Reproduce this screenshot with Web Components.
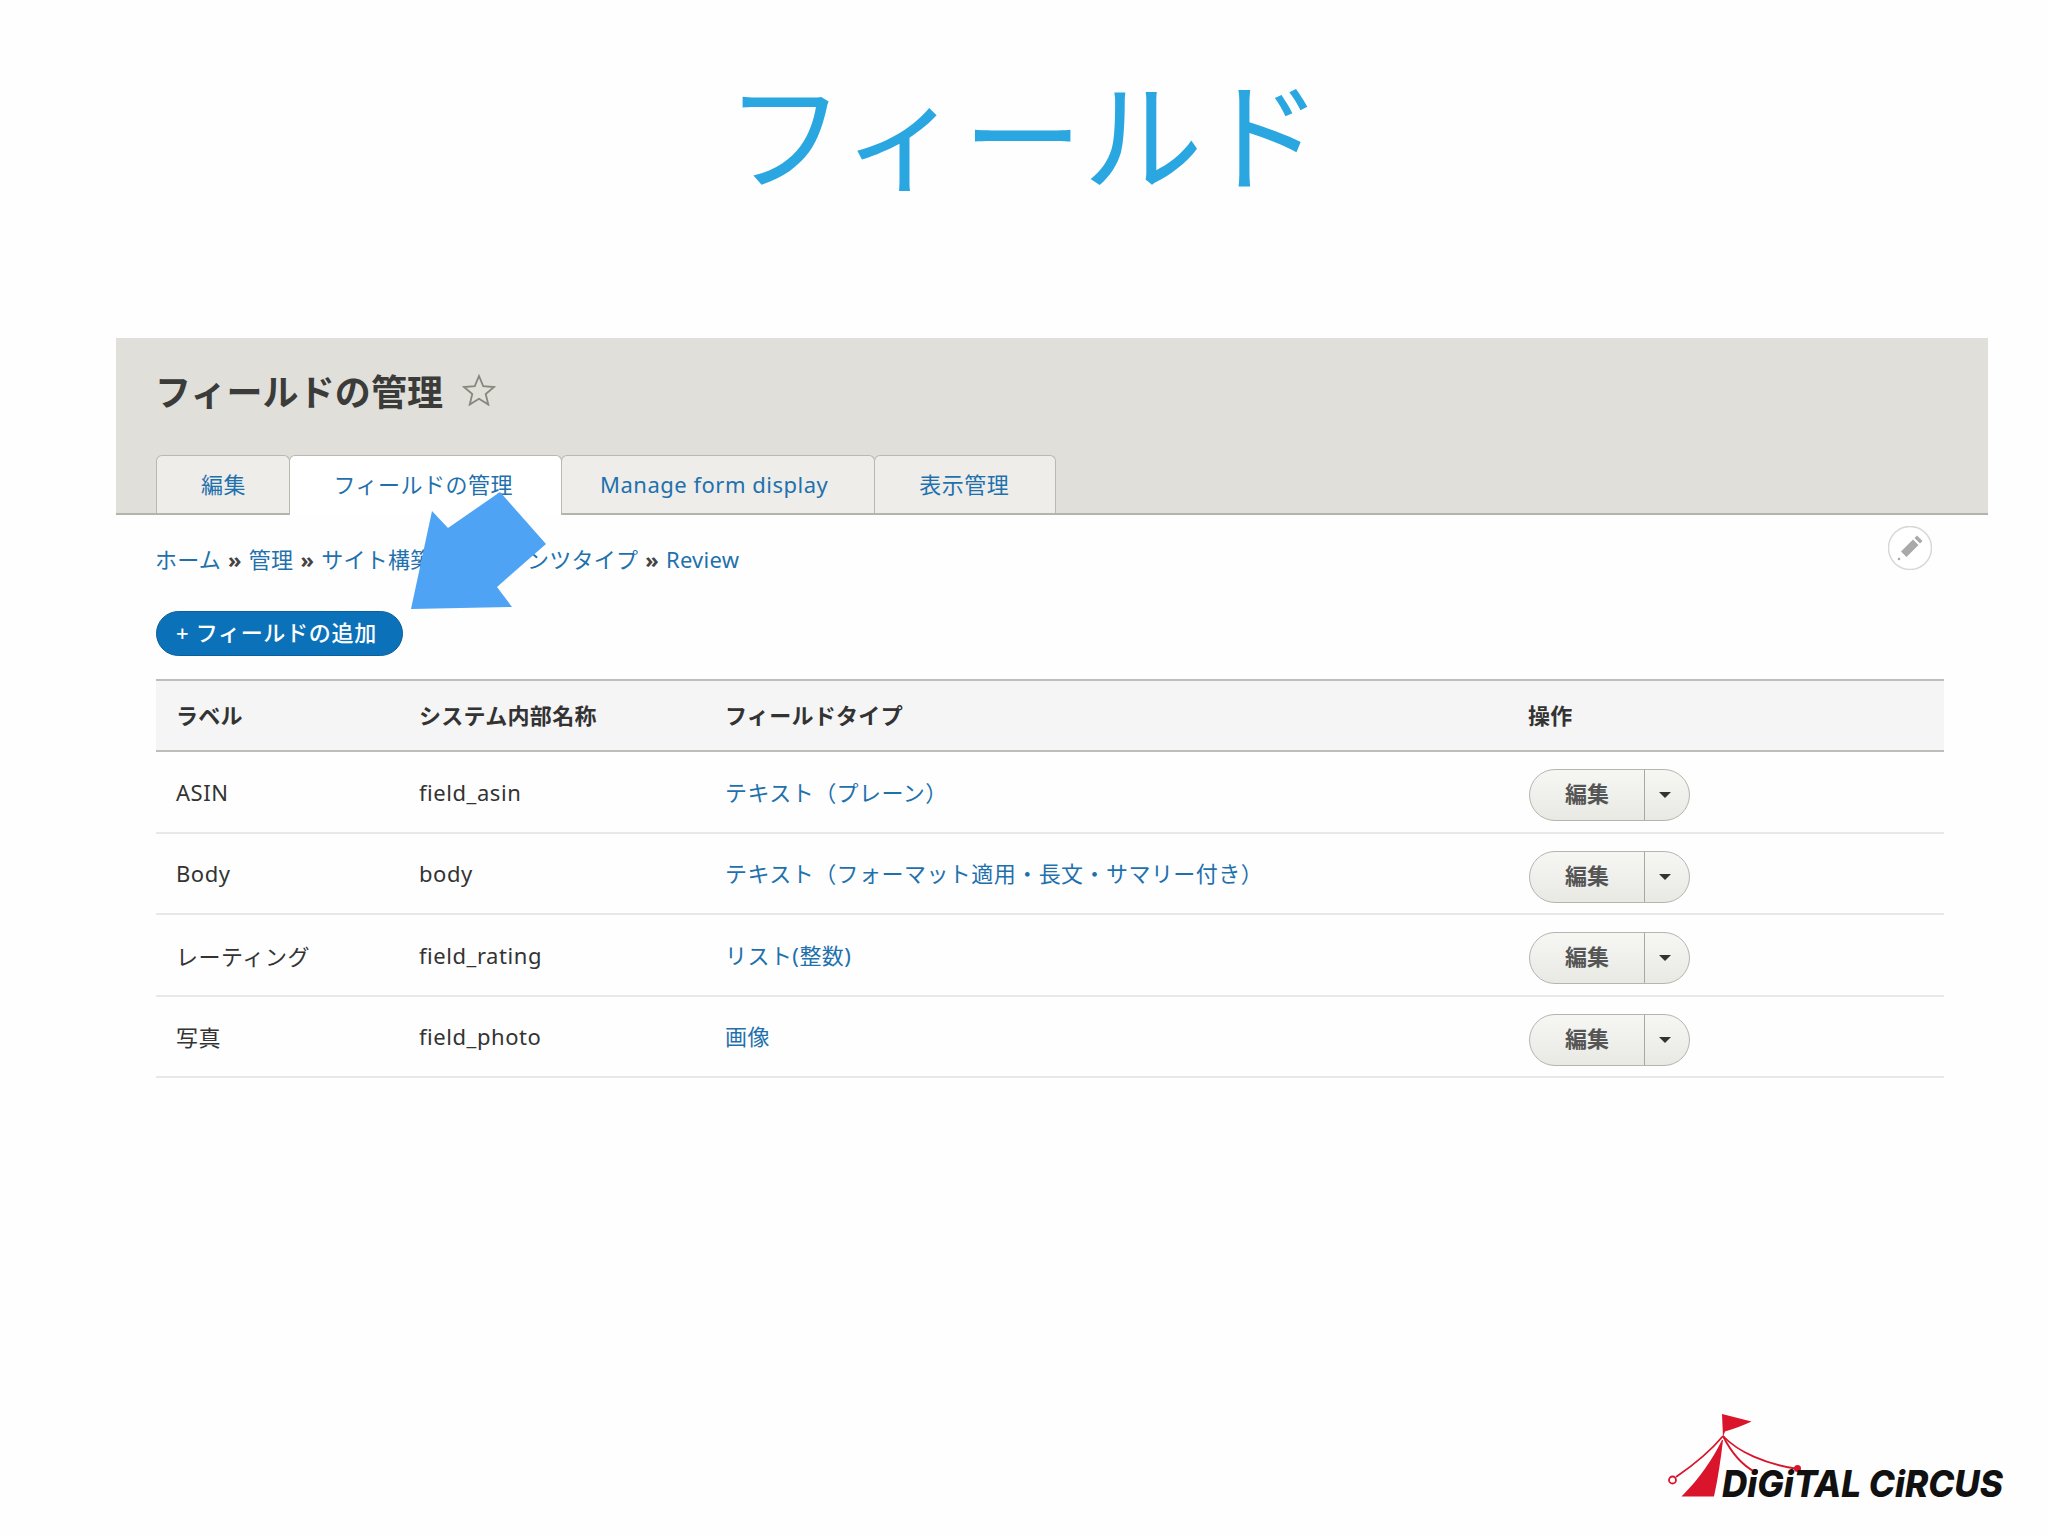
<!DOCTYPE html>
<html lang="ja">
<head>
<meta charset="utf-8">
<title>フィールド</title>
<style>
	html, body {
		margin: 0;
		background: #fefefe;
	}

	body {
		font-family: "Noto Sans", "Noto Sans CJK JP", sans-serif;
		font-size: 22px;
		color: #333;
	}
</style>
</head>
<body>
<field-slide>
	<span slot="title">フィールド</span>
	<admin-header title-text="フィールドの管理">
		<admin-tab style="padding-right: 42.500px">編集</admin-tab>
		<admin-tab active style="padding-right: 48px">フィールドの管理</admin-tab>
		<admin-tab style="padding: 0 46px 0 38px">Manage form display</admin-tab>
		<admin-tab style="padding-right: 46px">表示管理</admin-tab>
	</admin-header>
	<admin-breadcrumb>
		<a>ホーム</a><b>»</b><a>管理</a><b>»</b><a>サイト構築</a><b>»</b><a>コンテンツタイプ</a><b>»</b><a>Review</a>
	</admin-breadcrumb>
	<add-button>+ フィールドの追加</add-button>
	<field-table>
		<field-row head>
			<span slot="label">ラベル</span>
			<span slot="name">システム内部名称</span>
			<span slot="type">フィールドタイプ</span>
			<span slot="ops">操作</span>
		</field-row>
		<field-row>
			<span slot="label">ASIN</span>
			<span slot="name">field_asin</span>
			<span slot="type">テキスト（プレーン）</span>
			<op-button slot="ops">編集</op-button>
		</field-row>
		<field-row>
			<span slot="label">Body</span>
			<span slot="name">body</span>
			<span slot="type">テキスト（フォーマット適用・長文・サマリー付き）</span>
			<op-button slot="ops">編集</op-button>
		</field-row>
		<field-row>
			<span slot="label">レーティング</span>
			<span slot="name">field_rating</span>
			<span slot="type">リスト(整数)</span>
			<op-button slot="ops">編集</op-button>
		</field-row>
		<field-row>
			<span slot="label">写真</span>
			<span slot="name">field_photo</span>
			<span slot="type">画像</span>
			<op-button slot="ops">編集</op-button>
		</field-row>
	</field-table>
</field-slide>

<script>
class FieldSlide extends HTMLElement {
	connectedCallback() {
		if (this.shadowRoot) return;
		const shadow = this.attachShadow({ mode: 'open' });
		shadow.innerHTML = `
			<style>
				:host {
					display: flex;
					flex-direction: column;
					position: relative;
					height: 1536px;
					overflow: hidden;
				}

				h1 {
					margin: 0;
					height: 338px;
					box-sizing: border-box;
					padding-top: 50px;
					text-align: center;
					font-family: "Noto Sans CJK JP", sans-serif;
					font-weight: 400;
					font-size: 120px;
					line-height: 160px;
					color: #2aa7e0;
				}

				.page {
					margin: 0 60px 0 116px;
				}

				.body {
					padding: 0 44px 0 40px;
				}

				.arrow {
					position: absolute;
					left: 0;
					top: 0;
				}

				digital-logo {
					margin: auto 8px 6px auto;
				}
			</style>
			<h1><slot name="title"></slot></h1>
			<div class="page">
				<slot name="header"></slot>
				<div class="body"><slot></slot></div>
			</div>
			<digital-logo></digital-logo>
			<svg class="arrow" width="600" height="640" viewBox="0 0 600 640">
				<polygon fill="#4fa3f5" points="411,609 432,511 448,528 500,492 546,544 497,587 512,607"/>
			</svg>
		`;
		this.querySelector('admin-header').slot = 'header';
	}
}

class AdminHeader extends HTMLElement {
	connectedCallback() {
		if (this.shadowRoot) return;
		const shadow = this.attachShadow({ mode: 'open' });
		shadow.innerHTML = `
			<style>
				:host {
					display: block;
					box-sizing: border-box;
					height: 177px;
					padding: 0 40px;
					background: #e0dfda;
					border-bottom: 2px solid #b4b3ad;
				}

				.title {
					display: flex;
					align-items: center;
					gap: 19px;
					height: 117px;
					padding-bottom: 14px;
					box-sizing: border-box;
				}

				h2 {
					margin: 0 0 0 -1px;
					font-family: "Noto Sans CJK JP", sans-serif;
					font-size: 36px;
					font-weight: 700;
					letter-spacing: 0.100px;
					color: #3b3b39;
				}

				.tabs {
					display: flex;
					align-items: flex-end;
				}
			</style>
			<div class="title">
				<h2>${this.getAttribute('title-text')}</h2>
				<svg width="34" height="32" viewBox="0 0 34 32">
					<polygon points="17,2 21.2,12.2 32,13 23.7,20 26.3,30.6 17,24.8 7.7,30.6 10.3,20 2,13 12.8,12.2" fill="none" stroke="#87877d" stroke-width="1.8"/>
				</svg>
			</div>
			<div class="tabs"><slot></slot></div>
		`;
	}
}

class AdminTab extends HTMLElement {
	connectedCallback() {
		if (this.shadowRoot) return;
		const shadow = this.attachShadow({ mode: 'open' });
		shadow.innerHTML = `
			<style>
				:host {
					display: block;
					box-sizing: border-box;
					height: 58px;
					margin-right: -1px;
					padding: 0 45px 0 44px;
					border: 1px solid #b9b8b1;
					border-bottom: 0;
					border-radius: 6px 6px 0 0;
					background: #eeedea;
					font-family: "Noto Sans", "Noto Sans CJK JP", sans-serif;
					font-size: 22px;
					letter-spacing: 0.500px;
					line-height: 56px;
					color: #1f71ad;
					white-space: nowrap;
				}

				:host([active]) {
					height: 60px;
					margin-bottom: -2px;
					background: #fff;
					position: relative;
				}
			</style>
			<slot></slot>
		`;
	}
}

class AdminBreadcrumb extends HTMLElement {
	connectedCallback() {
		if (this.shadowRoot) return;
		const shadow = this.attachShadow({ mode: 'open' });
		shadow.innerHTML = `
			<style>
				:host {
					display: flex;
					justify-content: space-between;
					align-items: flex-start;
					box-sizing: border-box;
					padding-top: 11px;
					height: 60px;
				}

				.crumbs {
					margin: 18px 0 0 -1px;
					line-height: 30px;
					font-size: 22px;
					letter-spacing: 0.250px;
					white-space: nowrap;
					color: #1f71ad;
				}

				::slotted(a) {
					color: #1f71ad;
				}

				::slotted(b) {
					margin: 0 7px;
					color: #444;
					font-weight: 700;
				}

				.pencil {
					margin-right: 12px;
				}
			</style>
			<div class="crumbs"><slot></slot></div>
			<svg class="pencil" width="44" height="44" viewBox="0 0 44 44">
				<circle cx="22" cy="22" r="21.500" fill="#fff" stroke="#d8d8d8" stroke-width="1.500"/>
				<path d="M29 9.500l5.500 5.500-2.500 2.500-5.500-5.500zM25 13.500l5.500 5.500-12 12-5.500-5.500z" fill="#a9a9a9"/>
				<circle cx="11" cy="33" r="1.300" fill="#a9a9a9"/>
			</svg>
		`;
	}
}

class AddButton extends HTMLElement {
	connectedCallback() {
		if (this.shadowRoot) return;
		const shadow = this.attachShadow({ mode: 'open' });
		shadow.innerHTML = `
			<style>
				:host {
					display: block;
					box-sizing: border-box;
					width: 247px;
					height: 45px;
					margin-top: 36px;
					padding-left: 19px;
					border-radius: 23px;
					border: 1px solid #0a5f9e;
					background: #0b72b9;
					color: #fff;
					font-family: "Noto Sans", "Noto Sans CJK JP", sans-serif;
					font-size: 22px;
					font-weight: 500;
					letter-spacing: 0.700px;
					line-height: 40px;
					white-space: nowrap;
				}
			</style>
			<slot></slot>
		`;
	}
}

class FieldTable extends HTMLElement {
	connectedCallback() {
		if (this.shadowRoot) return;
		const shadow = this.attachShadow({ mode: 'open' });
		shadow.innerHTML = `
			<style>
				:host {
					display: block;
					margin-top: 23px;
				}
			</style>
			<slot></slot>
		`;
	}
}

class FieldRow extends HTMLElement {
	connectedCallback() {
		if (this.shadowRoot) return;
		const shadow = this.attachShadow({ mode: 'open' });
		shadow.innerHTML = `
			<style>
				:host {
					display: grid;
					grid-template-columns: 243px 306px 803px 1fr;
					align-items: center;
					box-sizing: border-box;
					height: 81.500px;
					padding-left: 20px;
					border-bottom: 2px solid #e8e8e6;
					font-size: 22px;
					letter-spacing: 0.550px;
					color: #333;
				}

				:host([head]) {
					height: 73px;
					padding-bottom: 4px;
					border-top: 2px solid #bdbdb9;
					border-bottom: 2px solid #bdbdb9;
					background: #f6f5f5;
					font-weight: 700;
					font-family: "Noto Sans CJK JP", sans-serif;
					letter-spacing: 0.300px;
				}

				.type {
					margin-top: -2px;
					letter-spacing: 0.450px;
					color: #1f71ad;
				}

				:host([head]) .type {
					margin-top: 0;
					letter-spacing: 0.300px;
					color: #333;
				}
			</style>
			<div><slot name="label"></slot></div>
			<div><slot name="name"></slot></div>
			<div class="type"><slot name="type"></slot></div>
			<div><slot name="ops"></slot></div>
		`;
	}
}

class OpButton extends HTMLElement {
	connectedCallback() {
		if (this.shadowRoot) return;
		const shadow = this.attachShadow({ mode: 'open' });
		shadow.innerHTML = `
			<style>
				:host {
					display: flex;
					box-sizing: border-box;
					width: 161px;
					height: 52px;
					margin: 7px 0 0 1px;
					border: 1.500px solid #b5b5b0;
					border-radius: 26px;
					background: linear-gradient(#f6f6f3, #e9e9e4);
					font-weight: 700;
					letter-spacing: 0;
					color: #555;
				}

				.main {
					flex: 1;
					text-align: center;
					line-height: 46px;
					font-size: 22px;
				}

				.drop {
					display: flex;
					align-items: center;
					justify-content: center;
					box-sizing: border-box;
					width: 45px;
					padding-right: 5px;
					border-left: 1.500px solid #a8a8a3;
				}

				.drop i {
					width: 0;
					height: 0;
					border: 6px solid transparent;
					border-top: 6px solid #333;
					border-bottom: 0;
				}
			</style>
			<div class="main"><slot></slot></div>
			<div class="drop"><i></i></div>
		`;
	}
}

class DigitalLogo extends HTMLElement {
	connectedCallback() {
		if (this.shadowRoot) return;
		const shadow = this.attachShadow({ mode: 'open' });
		shadow.innerHTML = `
			<style>
				:host {
					display: block;
					width: 400px;
					height: 140px;
				}

				text {
					font-family: Inter, "Liberation Sans", sans-serif;
					font-style: italic;
					font-weight: 800;
					font-size: 37px;
				}
			</style>
			<svg width="400" height="140" viewBox="0 0 400 140">
				<path d="M82 24 L111.500 31.500 Q100 37 85 41.500 L83 47 Z" fill="#d9142b"/>
				<path d="M82 50 C72 70 60 88 41.500 106.500 L74 106.500 C78 88 81 68 83 50 Z" fill="#d9142b"/>
				<g fill="none" stroke="#d9142b" stroke-width="1.800">
					<path d="M83 46 C68 64 52 76 36 87"/>
					<path d="M83 46 C90 60 100 74 115 82"/>
					<path d="M83 46 C98 62 125 74 158 79"/>
				</g>
				<circle cx="32.500" cy="90" r="3.500" fill="#fff" stroke="#d9142b" stroke-width="1.800"/>
				<circle cx="115" cy="82" r="3" fill="#d9142b"/>
				<circle cx="157.500" cy="78.500" r="3.500" fill="#d9142b"/>
				<text x="82" y="107" textLength="281" lengthAdjust="spacingAndGlyphs" fill="#111">DiGiTAL CiRCUS</text>
			</svg>
		`;
	}
}

customElements.define('admin-header', AdminHeader);
customElements.define('admin-tab', AdminTab);
customElements.define('admin-breadcrumb', AdminBreadcrumb);
customElements.define('add-button', AddButton);
customElements.define('field-table', FieldTable);
customElements.define('field-row', FieldRow);
customElements.define('op-button', OpButton);
customElements.define('digital-logo', DigitalLogo);
customElements.define('field-slide', FieldSlide);
</script>
</body>
</html>
